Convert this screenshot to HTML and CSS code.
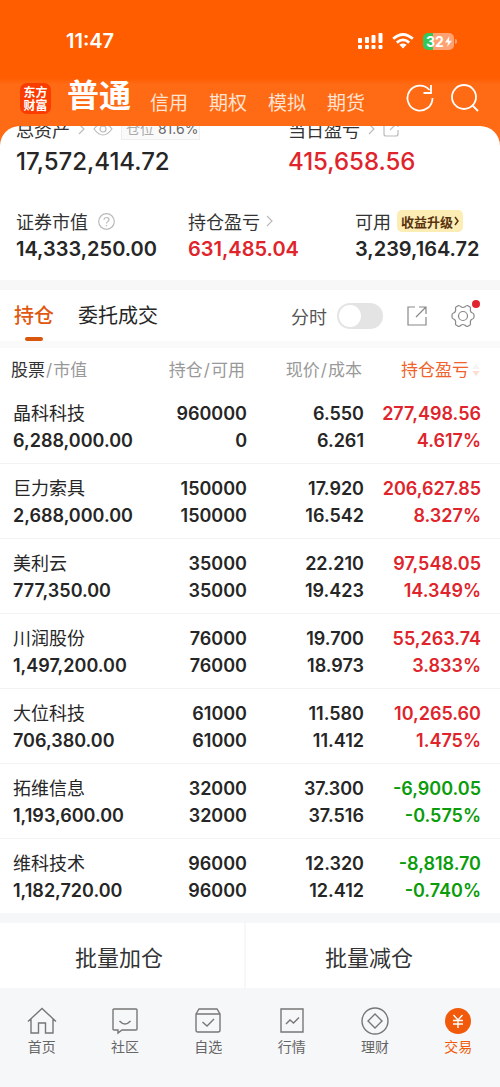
FILE: index.html
```
<!DOCTYPE html>
<html lang="zh-CN">
<head>
    <meta charset="UTF-8">
    <meta name="viewport" content="width=device-width, initial-scale=1.0">
    <title>交易 - 普通</title>
    <link rel="stylesheet" href="styles.css">
</head>
<body>
    <header class="header">
        <div class="status-bar">
            <span class="time">11:47</span>
            <div class="status-icons">
                <svg width="25" height="18" viewBox="0 0 25 18" fill="#fff">
                    <rect x="0" y="6" width="4" height="5" rx="1"/>
                    <rect x="7" y="5" width="4" height="6" rx="1"/>
                    <rect x="13.500" y="3" width="4" height="8" rx="1"/>
                    <rect x="20.500" y="1" width="4" height="10" rx="1"/>
                    <rect x="0" y="13" width="4" height="4" rx="1"/>
                    <rect x="7" y="13" width="4" height="4" rx="1"/>
                    <rect x="13.500" y="13" width="4" height="4" rx="1"/>
                    <rect x="20.500" y="13" width="4" height="4" rx="1"/>
                </svg>
                <svg width="22" height="18" viewBox="0 0 22 18" fill="none" stroke="#fff" stroke-width="2.800">
                    <path d="M1.200 6.800 Q11 -1.800 20.800 6.800"/>
                    <path d="M4.800 10.600 Q11 5.200 17.200 10.600"/>
                    <path d="M7.400 12.800 Q11 10 14.600 12.800 L11 16.500Z" fill="#fff" stroke="none"/>
                </svg>
                <span class="battery"><span class="battery-level">32</span><svg width="7" height="11" viewBox="0 0 8 12" fill="#fff"><path d="M5 0 L0 7 H3.500 L2.500 12 L8 5 H4.500Z"/></svg></span>
            </div>
        </div>
        <nav class="top-nav">
            <a class="logo" href="#"><span>东方</span><span>财富</span></a>
            <a class="top-link current" href="#">普通</a>
            <a class="top-link" href="#">信用</a>
            <a class="top-link" href="#">期权</a>
            <a class="top-link" href="#">模拟</a>
            <a class="top-link" href="#">期货</a>
            <div class="top-actions">
                <button class="icon-button" aria-label="刷新">
                    <svg width="28" height="28" viewBox="0 0 28 28" fill="none" stroke="#fff" stroke-width="1.800">
                        <path d="M26.500 14 A12.500 12.500 0 1 1 23.500 6"/>
                        <path d="M25 1 V9 H17.500"/>
                    </svg>
                </button>
                <button class="icon-button" aria-label="搜索">
                    <svg width="28" height="28" viewBox="0 0 28 28" fill="none" stroke="#fff" stroke-width="1.800">
                        <circle cx="13" cy="13" r="12"/>
                        <path d="M21.500 21.500 L27 27"/>
                    </svg>
                </button>
            </div>
        </nav>
    </header>

    <main>
        <section class="sheet">
            <div class="totals">
                <div class="total">
                    <div class="label small">总资产
                        <svg class="chevron" width="7" height="12" viewBox="0 0 7 12"><path d="M1 1 L6 6 L1 11"/></svg>
                        <svg class="eye" width="20" height="14" viewBox="0 0 20 14"><path d="M1 7 Q10 -5 19 7 Q10 19 1 7Z"/><circle cx="10" cy="7" r="3"/></svg>
                        <span class="ratio"><span class="muted">仓位</span> 81.6%</span>
                    </div>
                    <div class="total-value">17,572,414.72</div>
                </div>
                <div class="total">
                    <div class="label small">当日盈亏
                        <svg class="chevron" width="7" height="12" viewBox="0 0 7 12"><path d="M1 1 L6 6 L1 11"/></svg>
                        <svg class="share" width="16" height="16" viewBox="0 0 16 16"><path d="M8 1 H3 Q1 1 1 3 V13 Q1 15 3 15 H13 Q15 15 15 13 V9 M7 9 L14 2 M10 1 H15 V6"/></svg>
                    </div>
                    <div class="total-value up">415,658.56</div>
                </div>
            </div>
            <div class="details">
                <div class="detail">
                    <div class="label">证券市值
                        <svg class="help" width="17" height="17" viewBox="0 0 17 17"><circle cx="8.500" cy="8.500" r="7.800"/><path d="M6 6.800 Q6.200 4.500 8.500 4.500 Q11 4.500 11 6.700 Q11 8 9.500 8.800 Q8.500 9.300 8.500 10.500 M8.500 12 V13.300"/></svg>
                    </div>
                    <div class="detail-value">14,333,250.00</div>
                </div>
                <div class="detail">
                    <div class="label compact">持仓盈亏
                        <svg class="chevron" width="7" height="12" viewBox="0 0 7 12"><path d="M1 1 L6 6 L1 11"/></svg>
                    </div>
                    <div class="detail-value up">631,485.04</div>
                </div>
                <div class="detail">
                    <div class="label compact">可用
                        <a class="upgrade" href="#">收益升级<svg width="5" height="10" viewBox="0 0 5 10"><path d="M1 1 L4 5 L1 9"/></svg></a>
                    </div>
                    <div class="detail-value">3,239,164.72</div>
                </div>
            </div>
        </section>

        <section class="positions">
            <div class="tabs">
                <button class="tab active">持仓</button>
                <button class="tab">委托成交</button>
                <div class="tools">
                    <label class="switch-label" for="minuteChart">分时</label>
                    <input class="switch" type="checkbox" id="minuteChart">
                    <button class="icon-button" aria-label="导出">
                        <svg width="20" height="20" viewBox="0 0 20 20" fill="none" stroke="#888" stroke-width="1.200"><path d="M8 1 H1 V19 H19 V11 M9 11 L19 1 M12 1 H19 V8"/></svg>
                    </button>
                    <button class="icon-button settings" aria-label="设置">
                        <svg width="24" height="24" viewBox="0 0 24 24" fill="none" stroke="#888" stroke-width="1.200" stroke-linejoin="round">
                            <path d="M7.500 1.500 Q9 1.500 10 2.800 Q12 4.200 14 2.800 Q15 1.500 16.500 1.500 L19 3 Q20 4 19.300 5.500 Q19.300 8.500 21.500 9 Q23 9.500 23 11 V13 Q23 14.500 21.500 15 Q19.300 15.500 19.300 18.500 Q20 20 19 21 L16.500 22.500 Q15 22.500 14 21.200 Q12 19.800 10 21.200 Q9 22.500 7.500 22.500 L5 21 Q4 20 4.700 18.500 Q4.700 15.500 2.500 15 Q1 14.500 1 13 V11 Q1 9.500 2.500 9 Q4.700 8.500 4.700 5.500 Q4 4 5 3Z"/>
                            <circle cx="12" cy="12" r="4.500"/>
                        </svg>
                        <span class="dot"></span>
                    </button>
                </div>
            </div>
            <table>
                <thead>
                    <tr>
                        <th><span class="dark">股票</span><span class="slash">/</span>市值</th>
                        <th>持仓<span class="slash">/</span>可用</th>
                        <th>现价<span class="slash">/</span>成本</th>
                        <th class="sorted"><span>持仓盈亏</span><svg width="8" height="12" viewBox="0 0 8 12"><path d="M4 0 L8 5 H0Z" fill="#f4f4f4"/><path d="M4 12 L8 7 H0Z" fill="#fde0d5"/></svg></th>
                    </tr>
                </thead>
                <tbody>
                    <tr>
                        <td><span class="name">晶科科技</span><span>6,288,000.00</span></td>
                        <td><span>960000</span><span>0</span></td>
                        <td><span>6.550</span><span>6.261</span></td>
                        <td class="up"><span>277,498.56</span><span>4.617%</span></td>
                    </tr>
                    <tr>
                        <td><span class="name">巨力索具</span><span>2,688,000.00</span></td>
                        <td><span>150000</span><span>150000</span></td>
                        <td><span>17.920</span><span>16.542</span></td>
                        <td class="up"><span>206,627.85</span><span>8.327%</span></td>
                    </tr>
                    <tr>
                        <td><span class="name">美利云</span><span>777,350.00</span></td>
                        <td><span>35000</span><span>35000</span></td>
                        <td><span>22.210</span><span>19.423</span></td>
                        <td class="up"><span>97,548.05</span><span>14.349%</span></td>
                    </tr>
                    <tr>
                        <td><span class="name">川润股份</span><span>1,497,200.00</span></td>
                        <td><span>76000</span><span>76000</span></td>
                        <td><span>19.700</span><span>18.973</span></td>
                        <td class="up"><span>55,263.74</span><span>3.833%</span></td>
                    </tr>
                    <tr>
                        <td><span class="name">大位科技</span><span>706,380.00</span></td>
                        <td><span>61000</span><span>61000</span></td>
                        <td><span>11.580</span><span>11.412</span></td>
                        <td class="up"><span>10,265.60</span><span>1.475%</span></td>
                    </tr>
                    <tr>
                        <td><span class="name">拓维信息</span><span>1,193,600.00</span></td>
                        <td><span>32000</span><span>32000</span></td>
                        <td><span>37.300</span><span>37.516</span></td>
                        <td class="down"><span>-6,900.05</span><span>-0.575%</span></td>
                    </tr>
                    <tr>
                        <td><span class="name">维科技术</span><span>1,182,720.00</span></td>
                        <td><span>96000</span><span>96000</span></td>
                        <td><span>12.320</span><span>12.412</span></td>
                        <td class="down"><span>-8,818.70</span><span>-0.740%</span></td>
                    </tr>
                </tbody>
            </table>
        </section>

        <div class="batch">
            <button class="batch-button">批量加仓</button>
            <button class="batch-button">批量减仓</button>
        </div>
    </main>

    <nav class="bottom-nav">
        <a class="nav-item" href="#">
            <svg width="30" height="28" viewBox="0 0 30 28"><path d="M1 14.500 L15 1.500 L29 14.500 M4 12 V26 H11.500 V16 H18.500 V26 H26 V12"/></svg>
            首页
        </a>
        <a class="nav-item" href="#">
            <svg width="30" height="28" viewBox="0 0 30 28"><path d="M4 2 H26 Q27 2 27 3 V22 Q27 23 26 23 H12 L8 26 V23 H4 Q3 23 3 22 V3 Q3 2 4 2Z M9.500 14 Q15 20 20.500 14"/></svg>
            社区
        </a>
        <a class="nav-item" href="#">
            <svg width="30" height="28" viewBox="0 0 30 28"><path d="M3 7 L6 2 H24 L27 7 V23 Q27 25 25 25 H5 Q3 25 3 23Z H27 M9.500 15 L14 19 L21 12"/></svg>
            自选
        </a>
        <a class="nav-item" href="#">
            <svg width="30" height="28" viewBox="0 0 30 28"><path d="M4 2 H26 V25 H4Z M9 17 L13 13 L16.500 16 L22 10.500"/></svg>
            行情
        </a>
        <a class="nav-item" href="#">
            <svg width="30" height="28" viewBox="0 0 30 28"><circle cx="15" cy="14" r="13"/><path d="M15 7 L22 14 L15 21 L8 14Z"/></svg>
            理财
        </a>
        <a class="nav-item active" href="#">
            <svg width="30" height="28" viewBox="0 0 30 28"><circle cx="15" cy="14" r="13" fill="#f15a0a" stroke="none"/><path d="M10.500 8 L15 13 L19.500 8 M15 13 V21 M10 13.500 H20 M10 17 H20" stroke="#fff"/></svg>
            交易
        </a>
    </nav>
</body>
</html>
```
FILE: styles.css
```
* {
    box-sizing: border-box;
}
body {
    font-family: Inter, "Noto Sans CJK SC", sans-serif;
    background-color: #ffffff;
    color: #262626;
    margin: 0;
}
a {
    color: inherit;
    text-decoration: none;
}
button {
    font: inherit;
    color: inherit;
    background: none;
    border: none;
    padding: 0;
    cursor: pointer;
}
svg {
    display: block;
    flex: none;
}
.up {
    color: #e0242b;
}
.down {
    color: #0a9c0a;
}

/* header */
.header {
    background: linear-gradient(#ff5d00 0, #ff5d00 78px, #ff6a14 84px, #ff6a14 100%);
    color: #fff;
    padding: 28px 21px 24px 20px;
}
.status-bar {
    display: flex;
    justify-content: space-between;
    align-items: center;
    height: 26px;
    padding: 0 25px 0 46px;
}
.time {
    font-size: 20px;
    font-weight: 600;
}
.status-icons {
    display: flex;
    align-items: center;
    gap: 9px;
}
.battery {
    position: relative;
    display: flex;
    align-items: center;
    gap: 1px;
    width: 31px;
    height: 17px;
    padding-left: 3px;
    border-radius: 5px;
    background: linear-gradient(90deg, #34c759 32%, #ffa273 32%);
    font-size: 14px;
    font-weight: 700;
}
.battery::after {
    content: "";
    position: absolute;
    top: 6px;
    right: -3px;
    width: 2px;
    height: 5px;
    border-radius: 0 2px 2px 0;
    background-color: #ffa273;
}
.top-nav {
    display: flex;
    align-items: flex-end;
    gap: 21px;
    height: 48px;
    margin-top: 24px;
    padding-bottom: 9px;
}
.top-link {
    font-size: 19px;
    line-height: 26px;
    color: #ffe3d2;
    white-space: nowrap;
}
.top-link.current {
    font-size: 32px;
    font-weight: 700;
    line-height: 42px;
    color: #fff;
    margin: 0 -2px 0 -5px;
}
.logo {
    display: flex;
    flex-direction: column;
    align-items: center;
    justify-content: center;
    width: 31px;
    height: 31px;
    margin-bottom: 3px;
    border-radius: 7px;
    background-color: #fa3c00;
    font-size: 12px;
    font-weight: 700;
    line-height: 13px;
}
.top-actions {
    display: flex;
    gap: 17px;
    margin-left: auto;
    padding-bottom: 5px;
}

/* account summary */
.sheet {
    background-color: #fff;
    border-radius: 20px 20px 0 0;
    margin-top: -24px;
    padding: 0 16px 16px;
    overflow: hidden;
}
.label {
    display: flex;
    align-items: center;
    gap: 10px;
    height: 26px;
    font-size: 18px;
    color: #333;
    white-space: nowrap;
}
.label.small {
    gap: 8px;
    height: 24px;
}
.label.compact {
    gap: 6px;
}
.totals {
    display: grid;
    grid-template-columns: 272px 1fr;
    margin-top: -9px;
}
.total-value {
    font-size: 24px;
    font-weight: 500;
    line-height: 42px;
}
.details {
    display: grid;
    grid-template-columns: 172px 167px 1fr;
    margin-top: 25px;
}
.detail-value {
    font-size: 20px;
    font-weight: 600;
    line-height: 30px;
}
.chevron, .eye, .share, .help {
    fill: none;
    stroke: #bbb;
    stroke-width: 1.200;
}
.ratio {
    border: 1px solid #eee;
    background-color: #fafafa;
    font-size: 14px;
    line-height: 20px;
    padding: 0 1px 0 4px;
    color: #666;
}
.muted {
    color: #aaa;
}
.upgrade {
    display: flex;
    align-items: center;
    gap: 1px;
    height: 22px;
    padding: 0 4px;
    border-radius: 5px;
    background-color: #fbedb3;
    color: #59330f;
    font-size: 13px;
    font-weight: 700;
}
.upgrade svg {
    fill: none;
    stroke: #59330f;
    stroke-width: 1.500;
}

/* positions */
.positions {
    border-top: 10px solid #f7f7f8;
}
.tabs {
    display: flex;
    align-items: center;
    gap: 24px;
    height: 58px;
    padding: 0 25px 0 14px;
    border-bottom: 7px solid #fafafa;
}
.tab {
    position: relative;
    font-size: 20px;
    line-height: 28px;
    white-space: nowrap;
}
.tab.active {
    color: #e0580f;
    font-weight: 500;
}
.tab.active::after {
    content: "";
    position: absolute;
    left: 11px;
    bottom: -11px;
    width: 18px;
    height: 4px;
    border-radius: 2px;
    background-color: #d9560f;
}
.tools {
    display: flex;
    align-items: center;
    margin-left: auto;
}
.switch-label {
    font-size: 18px;
    color: #555;
    margin-right: 10px;
}
.switch {
    appearance: none;
    width: 46px;
    height: 26px;
    margin: 0 24px 0 0;
    padding: 2px;
    border-radius: 13px;
    background-color: #e4e4e5;
}
.switch::before {
    content: "";
    display: block;
    width: 22px;
    height: 22px;
    border-radius: 50%;
    background-color: #fff;
}
.switch:checked {
    background-color: #f15a0a;
}
.switch:checked::before {
    margin-left: auto;
}
.settings {
    position: relative;
    margin-left: 24px;
}
.dot {
    position: absolute;
    top: -4px;
    right: -5px;
    width: 8px;
    height: 8px;
    border-radius: 50%;
    background-color: #e0242b;
}
table {
    width: 100%;
    table-layout: fixed;
    border-collapse: collapse;
}
th {
    height: 40px;
    padding: 0 3px 0 0;
    font-size: 17px;
    font-weight: 400;
    color: #999;
    text-align: right;
    white-space: nowrap;
}
th:first-child {
    width: 28%;
    padding-left: 11px;
    text-align: left;
}
th:nth-child(2) {
    width: 22%;
    padding-right: 5px;
}
th:nth-child(3) {
    width: 23%;
}
th:last-child {
    width: 27%;
    padding-right: 20px;
}
.dark {
    color: #333;
}
.slash {
    margin: 0 1px;
}
.sorted {
    color: #f0622a;
}
.sorted svg {
    display: inline-block;
    margin-left: 3px;
}
td {
    height: 75px;
    padding: 3px 0 0;
    border-bottom: 1px solid #f3f3f3;
    font-size: 18px;
    font-weight: 600;
    line-height: 27px;
    text-align: right;
    vertical-align: middle;
}
tr:last-child td {
    border-bottom: none;
}
td span {
    display: block;
}
td:first-child {
    padding-left: 13px;
    text-align: left;
}
td:nth-child(2) {
    padding-right: 3px;
}
td:nth-child(3) {
    padding-right: 1px;
}
td:last-child {
    padding-right: 19px;
}
.name {
    font-weight: 400;
}

/* batch buttons */
.batch {
    display: flex;
    padding-right: 8px;
    border-top: 10px solid #f6f7f9;
}
.batch-button {
    width: 50%;
    height: 65px;
    font-size: 22px;
    color: #333;
}
.batch-button:first-child {
    padding-right: 6px;
    border-right: 2px solid #f6f7f9;
}

/* bottom navigation */
.bottom-nav {
    display: flex;
    height: 99px;
    padding-top: 19px;
    background-color: #f6f7f9;
}
.nav-item {
    display: flex;
    flex: 1;
    flex-direction: column;
    align-items: center;
    font-size: 14px;
    line-height: 24px;
    color: #666;
}
.nav-item svg {
    fill: none;
    stroke: #777;
    stroke-width: 1.400;
}
.nav-item.active {
    color: #f15a0a;
}
```
